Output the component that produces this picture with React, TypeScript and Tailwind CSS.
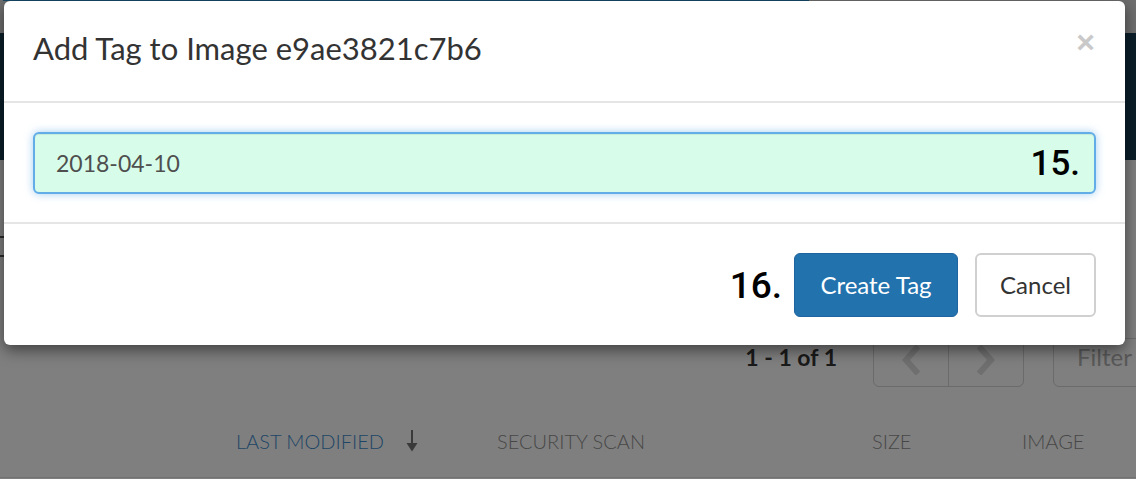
import React from "react";

function ArrowDown() {
  return (
    <svg width="12" height="22" viewBox="0 0 12 22" className="shrink-0">
      <rect x="5" y="0" width="2" height="15" fill="#3a3a3a" />
      <path d="M0.5 13 L11.5 13 L6 21.5 Z" fill="#3a3a3a" />
    </svg>
  );
}

function Chevron({ dir }: { dir: "left" | "right" }) {
  return (
    <svg width="20" height="30" viewBox="0 0 20 30">
      {dir === "left" ? (
        <polyline points="17,1.5 5,15 17,28.5" fill="none" stroke="#6f6f6f" strokeWidth="6" strokeLinejoin="miter" />
      ) : (
        <polyline points="3,1.5 15,15 3,28.5" fill="none" stroke="#6f6f6f" strokeWidth="6" strokeLinejoin="miter" />
      )}
    </svg>
  );
}

export default function App() {
  return (
    <div className="relative h-[479px] w-[1136px] overflow-hidden bg-[#7f7f7f] font-['Lato',sans-serif]">
      {/* background page */}
      <div className="flex flex-col">
        <div className="h-[33px] bg-[#6f6f6f]">
          <div className="ml-[3px] h-px w-[806px] bg-[#154a6a]" />
        </div>
        <div className="h-[127px] bg-[#0b1e29]" />
        <div className="h-[76px]" />
        <div className="h-[2px] w-[4px] bg-[#2b2b2b]" />
        <div className="h-[17px]" />
        <div className="h-[2px] w-[4px] bg-[#2b2b2b]" />
        <div className="h-[81px]" />
        <div className="flex h-[49px] items-center">
          <div className="mb-[10px] flex w-[837px] shrink-0 justify-end text-[23px] font-bold text-[#1a1a1a]">1 - 1 of 1</div>
          <div className="ml-[36px] flex h-[49px] w-[151px] shrink-0 rounded-[6px] border border-[#6b6b6b]">
            <div className="flex flex-1 items-center justify-center border-r border-[#6b6b6b] pb-[6px]">
              <Chevron dir="left" />
            </div>
            <div className="flex flex-1 items-center justify-center pb-[6px]">
              <Chevron dir="right" />
            </div>
          </div>
          <div className="ml-[29px] flex h-[49px] w-[160px] shrink-0 items-center rounded-[6px] border border-[#6b6b6b] pb-[12px] pl-[23px] text-[24px] text-[#595959]">
            Filter
          </div>
        </div>
        <div className="h-[33px]" />
        <div className="flex h-[42px] items-center pl-[236px] text-[20px] font-light uppercase text-[#474747]">
          <div className="flex w-[261px] shrink-0 items-center gap-[22px]">
            <span className="text-[#1d4566]">Last Modified</span>
            <ArrowDown />
          </div>
          <div className="w-[375px] shrink-0">Security Scan</div>
          <div className="w-[150px] shrink-0">Size</div>
          <div className="shrink-0">Image</div>
        </div>
        <div className="h-[15px]" />
        <div className="h-px bg-[#737373]" />
      </div>

      {/* modal */}
      <div className="absolute left-[4px] top-[1px] w-[1121px] rounded-[6px] bg-white shadow-[0_5px_15px_rgba(0,0,0,0.5)]">
        <div className="flex h-[102px] items-center justify-between border-b-2 border-[#e5e5e5] pb-[4px] pl-[29px] pr-[30px]">
          <h4 className="text-[31px] leading-[1.2] text-[#333333]">Add Tag to Image e9ae3821c7b6</h4>
          <button className="mb-[14px] font-['Liberation_Sans',sans-serif] text-[32px] font-bold leading-none text-[#c9c9c9]">
            ×
          </button>
        </div>
        <div className="h-[121px] border-b-2 border-[#e5e5e5] px-[29px] pt-[29px]">
          <div className="flex h-[62px] items-center justify-between rounded-[6px] border-2 border-[#62ace8] bg-[#d7fdea] pl-[21px] pr-[14px] shadow-[inset_0_1px_1px_rgba(0,0,0,0.075),0_0_8px_rgba(102,175,233,0.6)]">
            <span className="text-[23px] text-[#4f4f4f]">2018-04-10</span>
            <span className="font-['Roboto',sans-serif] text-[35px] font-medium leading-none text-black">15.</span>
          </div>
        </div>
        <div className="flex h-[121px] items-start justify-end pr-[29px] pt-[29px]">
          <div className="flex items-center">
            <span className="mr-[12px] font-['Roboto',sans-serif] text-[37px] font-medium leading-none text-black">16.</span>
            <button className="h-[64px] w-[164px] rounded-[6px] border border-[#1e64a0] bg-[#2272ae] text-[24px] text-white">
              Create Tag
            </button>
            <button className="ml-[17px] h-[64px] w-[121px] rounded-[6px] border-2 border-[#d0d0d0] bg-white text-[24px] text-[#333333]">
              Cancel
            </button>
          </div>
        </div>
      </div>
    </div>
  );
}
